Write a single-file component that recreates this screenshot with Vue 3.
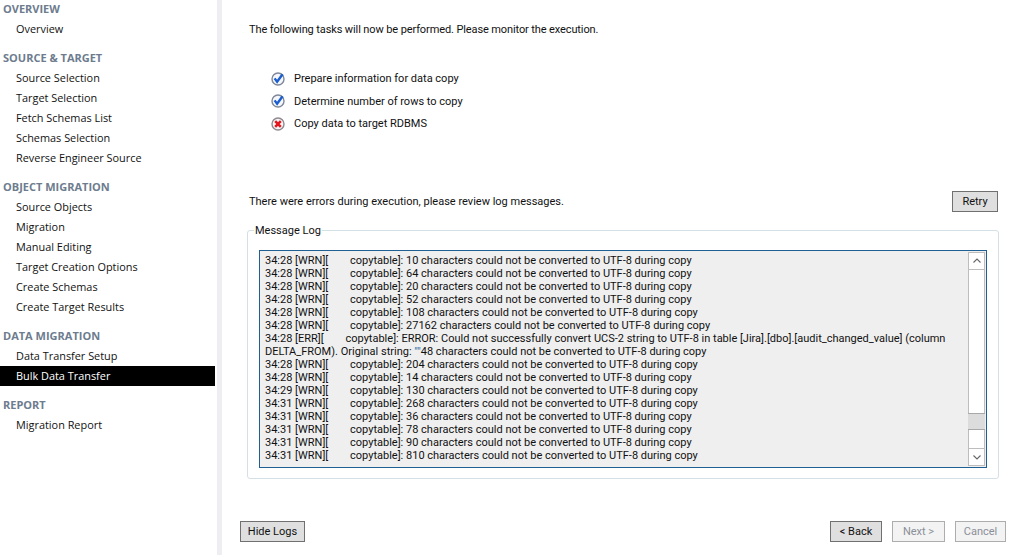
<script setup>
const groups = [
  { title: 'OVERVIEW', items: ['Overview'] },
  { title: 'SOURCE & TARGET', items: ['Source Selection', 'Target Selection', 'Fetch Schemas List', 'Schemas Selection', 'Reverse Engineer Source'] },
  { title: 'OBJECT MIGRATION', items: ['Source Objects', 'Migration', 'Manual Editing', 'Target Creation Options', 'Create Schemas', 'Create Target Results'] },
  { title: 'DATA MIGRATION', items: ['Data Transfer Setup', 'Bulk Data Transfer'] },
  { title: 'REPORT', items: ['Migration Report'] }
]
const tasks = [
  { label: 'Prepare information for data copy', ok: true },
  { label: 'Determine number of rows to copy', ok: true },
  { label: 'Copy data to target RDBMS', ok: false }
]
const logBefore = [
  ['34:28', 10], ['34:28', 64], ['34:28', 20], ['34:28', 52], ['34:28', 108], ['34:28', 27162]
]
const logAfter = [
  ['34:28', 204], ['34:28', 14], ['34:29', 130], ['34:31', 268], ['34:31', 36], ['34:31', 78], ['34:31', 90], ['34:31', 810]
]
const wrn = (t, n) => `${t} [WRN][        copytable]: ${n} characters could not be converted to UTF-8 during copy`
const errHead = '34:28 [ERR][        copytable]: ERROR: Could not successfully convert UCS-2 string to UTF-8 in table [Jira].[dbo].[audit_changed_value] (column DELTA_FROM). Original string: '
</script>

<template>
  <div class="page">
    <aside class="sidebar">
      <section v-for="g in groups" :key="g.title" class="group">
        <h3 class="group-title">{{ g.title }}</h3>
        <div v-for="item in g.items" :key="item" class="item" :class="{ active: item === 'Bulk Data Transfer' }">{{ item }}</div>
      </section>
    </aside>
    <main class="main">
      <p class="intro">The following tasks will now be performed. Please monitor the execution.</p>
      <ul class="tasks">
        <li v-for="t in tasks" :key="t.label" class="task">
          <svg v-if="t.ok" class="icon" viewBox="0 0 14 14" width="14" height="14">
            <circle cx="7" cy="7" r="6" fill="#f6f7fa" stroke="#7f8898" stroke-width="1.4" />
            <path d="M3.6 6.4 L6.1 9.8 L11.6 2.2" fill="none" stroke="#1a5ed0" stroke-width="2.4" />
          </svg>
          <svg v-else class="icon" viewBox="0 0 14 14" width="14" height="14">
            <circle cx="7" cy="7" r="6" fill="#f8f4f4" stroke="#8f8a90" stroke-width="1.4" />
            <path d="M4.2 4.2 L9.8 9.8 M9.8 4.2 L4.2 9.8" fill="none" stroke="#e3141c" stroke-width="2.5" />
          </svg>
          <span>{{ t.label }}</span>
        </li>
      </ul>
      <div class="status">
        <span>There were errors during execution, please review log messages.</span>
        <button class="btn retry">Retry</button>
      </div>
      <fieldset class="logbox">
        <legend>Message Log</legend>
        <div class="log">
          <div class="log-text">
            <div v-for="(l, i) in logBefore" :key="'a' + i">{{ wrn(l[0], l[1]) }}</div>
            <div>{{ errHead }}<span class="sel">""</span>48 characters could not be converted to UTF-8 during copy</div>
            <div v-for="(l, i) in logAfter" :key="'b' + i">{{ wrn(l[0], l[1]) }}</div>
          </div>
          <div class="scroll">
            <div class="arrow">
              <svg viewBox="0 0 16 16" width="16" height="16"><path d="M4.5 9.5 L8 6 L11.5 9.5" fill="none" stroke="#666" stroke-width="1.1" /></svg>
            </div>
            <div class="track"><div class="thumb"></div></div>
            <div class="arrow down">
              <svg viewBox="0 0 16 16" width="16" height="16"><path d="M4.5 6.5 L8 10 L11.5 6.5" fill="none" stroke="#666" stroke-width="1.1" /></svg>
            </div>
          </div>
        </div>
      </fieldset>
      <div class="footer">
        <button class="btn hide">Hide Logs</button>
        <div class="nav">
          <button class="btn back">&lt; Back</button>
          <button class="btn off next">Next &gt;</button>
          <button class="btn off cancel">Cancel</button>
        </div>
      </div>
    </main>
  </div>
</template>

<style>
html, body { margin: 0; background: #fff; overflow: hidden; }
</style>

<style scoped>
.page {
  display: flex;
  width: 1019px;
  height: 555px;
  overflow: hidden;
  font-family: "Open Sans", "Noto Sans", sans-serif;
  font-size: 11px;
  color: #111;
  background: #fff;
}
.sidebar {
  width: 217px;
  height: 555px;
  box-sizing: border-box;
  margin-top: -1px;
  padding-right: 2px;
  flex: none;
  font-size: 10.9px;
}
.group { margin-bottom: 9px; }
.group-title {
  margin: 0;
  height: 20px;
  line-height: 20px;
  padding-left: 3px;
  font-size: 11px;
  font-weight: 700;
  color: #6d7c8e;
}
.item {
  height: 20px;
  line-height: 20px;
  padding-left: 16px;
}
.item.active { background: #000; color: #fff; }
.main {
  flex: 1;
  min-width: 0;
  border-left: 5px solid #eeeef2;
  padding: 0 13px 0 18px;
  font-family: Roboto, "Open Sans", sans-serif;
  font-size: 11px;
}
.intro {
  margin: 22px 0 0 9px;
  line-height: 16px;
  letter-spacing: -0.11px;
}
.tasks {
  list-style: none;
  margin: 29.4px 0 0 31px;
  padding: 0;
}
.task {
  display: flex;
  align-items: center;
  height: 22.5px;
  gap: 9px;
}
.icon { flex: none; }
.status {
  display: flex;
  justify-content: space-between;
  align-items: center;
  margin: 57.1px 8px 0 9px;
  height: 20px;
}
.btn {
  box-sizing: border-box;
  height: 21px;
  padding: 0;
  border: 1px solid #707070;
  background: #dfdfdf;
  font: inherit;
  color: #111;
}
.retry { width: 46px; }
.logbox {
  box-sizing: border-box;
  width: 752px;
  height: 255px;
  margin: 12px 0 0 7px;
  padding: 12px 11px 0 11px;
  border: 1px solid #d5dfe6;
  border-radius: 3px;
  min-width: 0;
}
.logbox legend {
  padding: 0 1px;
  margin-left: -5px;
  line-height: 14px;
  font-size: 11px;
}
.log {
  box-sizing: border-box;
  display: flex;
  width: 728px;
  height: 218px;
  border: 1px solid #1f5f92;
  background: #efefef;
  padding: 1px;
}
.log-text {
  flex: 1;
  min-width: 0;
  box-sizing: border-box;
  padding: 2px 14px 0 4px;
  line-height: 13px;
  font-size: 11px;
  white-space: pre-wrap;
  color: #111;
}
.sel { color: #2f6ea8; }
.scroll {
  box-sizing: border-box;
  width: 17px;
  flex: none;
  display: flex;
  flex-direction: column;
  background: #fff;
  border: 1px solid #bdbdbd;
}
.arrow { height: 16px; line-height: 0; border-bottom: 1px solid #bdbdbd; }
.arrow.down { border-bottom: 0; border-top: 1px solid #bdbdbd; }
.track { flex: 1; position: relative; }
.thumb {
  position: absolute;
  left: -1px;
  right: -1px;
  bottom: 18px;
  height: 15px;
  background: #dcdcdc;
  border-top: 1px solid #a8a8a8;
  border-bottom: 1px solid #a8a8a8;
}
.footer {
  display: flex;
  justify-content: space-between;
  margin-top: 42px;
}
.hide { width: 65px; }
.nav { display: flex; gap: 10px; }
.back { width: 52px; }
.next { width: 53px; }
.cancel { width: 51px; }
.btn.off { background: #f3f3f3; border-color: #adadad; color: #8a8f98; }
</style>
